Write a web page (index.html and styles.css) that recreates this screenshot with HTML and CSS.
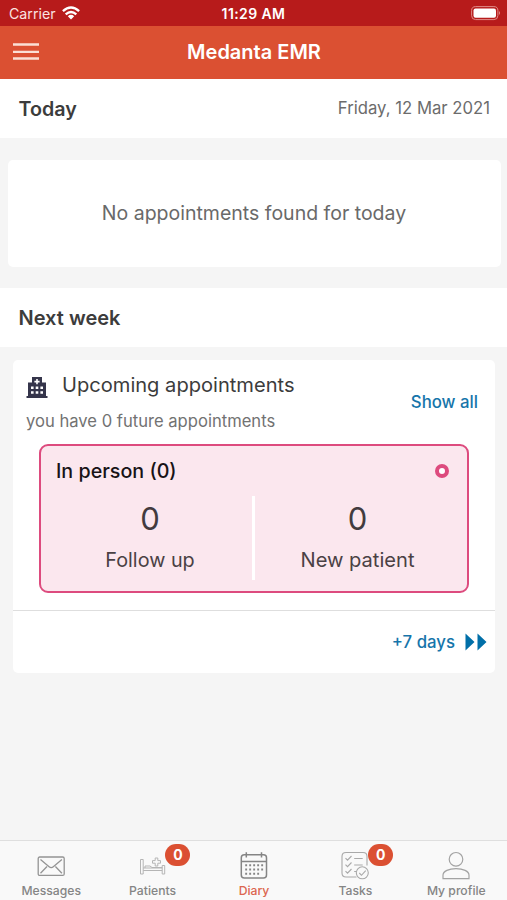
FILE: index.html
```html
<!DOCTYPE html>
<html lang="en">
<head>
<meta charset="utf-8">
<title>Medanta EMR</title>
<link rel="stylesheet" href="styles.css">
</head>
<body>
<div class="app">
  <div class="status">
    <div class="carrier"><span>Carrier</span>
      <svg width="18" height="14" viewBox="0 0 18 14"><path d="M.9 5.200Q9-2 17.100 5.200M3.700 8.400Q9 3.700 14.300 8.400" fill="none" stroke="#fff" stroke-width="2.400"/><path d="M5.800 10.200Q9 7.500 12.200 10.200L9 13.600Z" fill="#fff"/></svg>
    </div>
    <span class="clock">11:29 AM</span>
    <svg class="battery" width="31" height="15" viewBox="0 0 31 15"><rect x=".6" y=".6" width="26.3" height="13" rx="4" fill="none" stroke="#e08c88"/><rect x="2.5" y="2.5" width="22.5" height="9.2" rx="2" fill="#fff"/><path d="M28 5q2 2 0 4z" fill="#e08c88"/></svg>
  </div>
  <header class="header">
    <svg class="burger" width="26" height="17" viewBox="0 0 26 17"><path d="M0 1.500h26M0 8.800h26M0 15.500h26" stroke="#fbdfd5" stroke-width="2.300"/></svg>
    <h1>Medanta EMR</h1>
  </header>
  <section class="bar"><h2 class="today">Today</h2><span class="date">Friday, 12 Mar 2021</span></section>
  <div class="empty"><span>No appointments found for today</span></div>
  <section class="bar"><h2 class="next">Next week</h2></section>
  <section class="card">
    <div class="summary">
      <div>
        <div class="title">
          <svg width="22" height="22" viewBox="0 0 22 22"><path fill="#35354b" fill-rule="evenodd" d="M6 0h10v5.500h4v13.500h1.500v2H.5v-2H2V5.500h4zM10.200 2v1.800H8.400v1.600h1.800v1.800h1.600V5.400h1.800V3.800h-1.800V2zM5 9.500v2.600h2.600V9.500zM9.700 9.500v2.600h2.600V9.500zM14.400 9.500v2.600H17V9.500zM5 14.200v2.600h2.600v-2.600zM9.700 14.200v2.600h2.600v-2.600zM14.400 14.200v2.600H17v-2.600z"/></svg>
          <span>Upcoming appointments</span>
        </div>
        <p class="note">you have 0 future appointments</p>
      </div>
      <a class="show">Show all</a>
    </div>
    <div class="person">
      <div class="person-head"><span>In person (0)</span><i class="ring"></i></div>
      <div class="counts">
        <div class="count"><b>0</b><span class="follow">Follow up</span></div>
        <div class="count"><b>0</b><span class="new">New patient</span></div>
      </div>
    </div>
    <div class="more"><span>+7 days</span><svg width="22" height="18" viewBox="0 0 22 18"><path d="M.5.500 9.500 9l-9 8.500zM12.500.500 21.500 9l-9 8.500z" fill="#006fa8"/></svg></div>
  </section>
  <nav class="tabs">
    <div class="tab">
      <svg width="30" height="30" viewBox="0 0 30 30" fill="none" stroke="#949494" stroke-width="1.3"><rect x="2.200" y="6" width="26" height="18.400" rx="1.500"/><path d="m4.500 8.500 8.600 7.200q2.100 1.700 4.200 0l8.600-7.200M4.500 22.200l6.500-6.700M25.900 22.200l-6.500-6.700"/></svg>
      <span class="t1">Messages</span>
    </div>
    <div class="tab">
      <svg width="30" height="30" viewBox="0 0 30 30" fill="none" stroke="#b5b5b5" stroke-width="1"><path d="M2.500 8.500h2.700v14.500H2.500zM5.200 17h19M5.200 19.500h19M24.200 14.500h2.500v8.500h-2.500zM7 17v-2h5l2 1.500h10.200M17.200 7h2.600v2.600h2.700v2.600h-2.700V15h-2.600v-2.800h-2.700V9.600h2.700z"/></svg>
      <span class="t2">Patients</span><em class="badge">0</em>
    </div>
    <div class="tab active">
      <svg width="30" height="30" viewBox="0 0 30 30" fill="none" stroke="#858585" stroke-width="1.500"><rect x="2.300" y="3.700" width="25.200" height="23.300" rx="3"/><path d="M2.300 10.400h25.200M7.300 1.200v5.300M22.500 1.200v5.300"/><path d="M6.200 14.300h18M6.200 18.500h18M6.200 22.700h14" stroke-width="1.900" stroke-dasharray="1.900 2.100"/></svg>
      <span class="t3">Diary</span>
    </div>
    <div class="tab">
      <svg width="30" height="30" viewBox="0 0 30 30" fill="none" stroke="#a9a9a9" stroke-width="1.100"><path d="M27 14.500V5.500q0-4-4-4H6q-4 0-4 4v16.500q0 4 4 4h10.500"/><path d="m5.500 7.200 2 2 4-4.200M5.500 13.700l2 2 4-4.200M5.500 20.200l2 2 4-4.200M14.200 7.500h8.500M14.200 14h8.500M14.200 20.500h2"/><circle cx="22.300" cy="21.800" r="6"/><path d="m19.300 22 2.200 2.300 4.200-4.600"/></svg>
      <span class="t4">Tasks</span><em class="badge">0</em>
    </div>
    <div class="tab profile">
      <svg width="30" height="30" viewBox="0 0 30 30" fill="none" stroke="#a3a3a3" stroke-width="1.200"><circle cx="15" cy="8.300" r="6.800"/><path d="M2 27.700v-3.500C2 20 8 17.700 15 17.700s13 2.300 13 6.500v3.500z"/></svg>
      <span class="t5">My profile</span>
    </div>
  </nav>
</div>
</body>
</html>
```
FILE: styles.css
```css
* { box-sizing: border-box; margin: 0; padding: 0; }
body { font-family: Inter, "Liberation Sans", sans-serif; background: #f5f5f5; color: #3c3c3c; }
.app { width: 507px; height: 900px; display: flex; flex-direction: column; overflow: hidden; white-space: nowrap; }
svg { display: block; flex: none; }
.status { height: 26px; background: #b71b1b; color: #fff; display: grid; grid-template-columns: 1fr auto 1fr; align-items: center; padding: 1px 7px 0 9px; font-size: 14.2px; }
.carrier { display: flex; gap: 6px; align-items: center; color: #fbe3e1; }
.carrier svg { margin-top: -2px; }
.clock { font-weight: 600; font-size: 14px; letter-spacing: .4px; margin-left: -2px; }
.battery { justify-self: end; margin-right: -2px; }
.header { height: 53px; background: #db5032; color: #fff; display: grid; grid-template-columns: 1fr auto 1fr; align-items: center; padding: 0 12px 2px 13px; }
.header h1 { font-size: 20px; font-weight: 600; line-height: 26px; }
.bar { height: 59px; background: #fff; display: flex; align-items: center; justify-content: space-between; padding: 1px 17px 0 18.5px; }
h2 { font-size: 20px; font-weight: 600; line-height: 24px; }
.today { font-size: 19.700px; }
.date { font-size: 16.700px; color: #6c6c6c; margin-top: -2px; }
.empty { height: 107px; margin: 22px 6px 21px 8px; background: #fff; border-radius: 5px; display: flex; align-items: center; justify-content: center; font-size: 19.500px; color: #696969; padding: 0 1px 2px 0; }
.card { height: 313px; margin: 13px 12px 0 13px; background: #fff; border-radius: 5px; }
.summary { height: 84px; display: flex; justify-content: space-between; padding: 12px 17px 0 13px; }
.title { display: flex; gap: 14px; align-items: center; font-size: 20.100px; line-height: 25px; }
.title svg { margin: 5px 0 0; }
.note { font-size: 16.600px; line-height: 20px; margin-top: 12px; color: #727272; }
.show { font-size: 16.800px; font-weight: 500; color: #1675aa; line-height: 20px; margin-top: 20px; }
.person { width: 430px; height: 149px; margin-left: 26px; border: 2.5px solid #dd4b7e; border-radius: 9px; background: #fbe7ee; }
.person-head { height: 50px; display: flex; justify-content: space-between; align-items: center; padding: 0 18px 0 15px; font-size: 19.700px; font-weight: 500; color: #181316; }
.ring { width: 14px; height: 14px; border: 4px solid #dd4b7e; border-radius: 50%; background: #fff; margin-top: -1px; }
.counts { height: 84px; display: grid; grid-template-columns: 214px 1fr; }
.count { display: flex; flex-direction: column; align-items: center; font-size: 19.800px; line-height: 24px; color: #4a4144; padding: 5px 7px 0 0; }
.count:first-child { border-right: 3px solid #fff; padding: 5px 0 0 7px; }
.count b { font-size: 31px; font-weight: 400; line-height: 36px; margin-bottom: 11px; color: #423b3e; }
.new { font-size: 20.100px; }
.more { height: 63px; margin-top: 17px; border-top: 1px solid #dedede; display: flex; justify-content: flex-end; align-items: center; gap: 10px; padding-right: 8px; font-size: 16.800px; font-weight: 500; color: #1675aa; }
.tabs { height: 60px; margin-top: auto; background: #f9f9f9; border-top: 1px solid #dfdfdf; display: grid; grid-template-columns: repeat(5, 1fr); }
.tab { position: relative; display: flex; flex-direction: column; align-items: center; padding: 10px 0 0 1px; font-size: 12.200px; font-weight: 500; line-height: 16px; color: #858585; }
.tab span { margin-top: 2px; }
.profile { padding-left: 0; }
.active { color: #dc6650; }
.badge { position: absolute; top: 3px; left: 64px; width: 25px; height: 22px; border-radius: 11px; background: #db5032; color: #fff; font-style: normal; font-weight: 700; font-size: 14px; line-height: 22px; text-align: center; }
```
